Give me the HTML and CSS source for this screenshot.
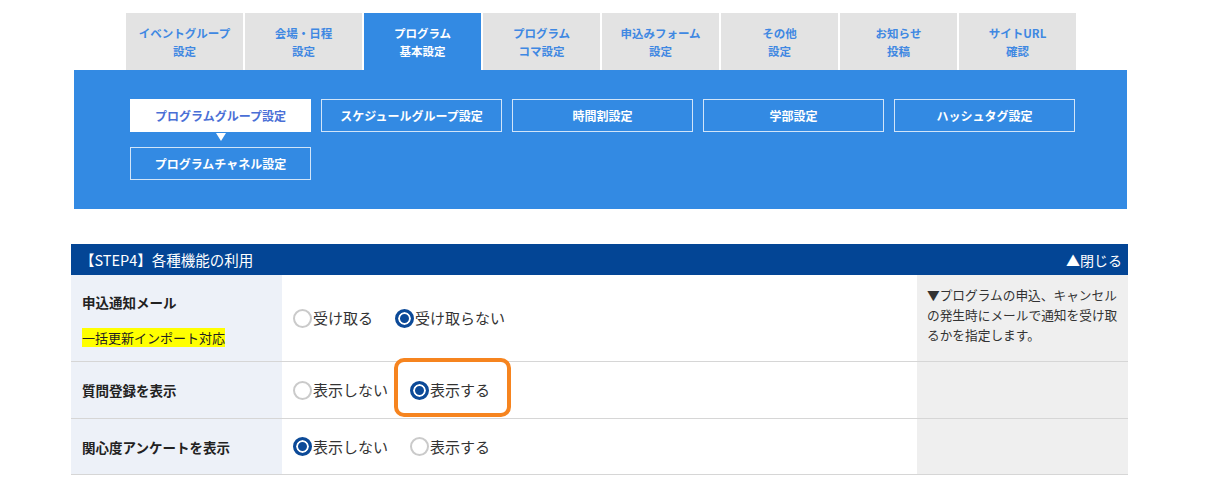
FILE: index.html
```html
<!DOCTYPE html>
<html lang="ja">
<head>
    <meta charset="UTF-8">
    <meta name="viewport" content="width=device-width, initial-scale=1.0">
    <title>プログラム基本設定</title>
    <link rel="stylesheet" href="styles.css">
</head>
<body>
    <div class="page">

        <ul class="tabs">
            <li class="tab">イベントグループ<br>設定</li>
            <li class="tab">会場・日程<br>設定</li>
            <li class="tab active">プログラム<br>基本設定</li>
            <li class="tab">プログラム<br>コマ設定</li>
            <li class="tab">申込みフォーム<br>設定</li>
            <li class="tab">その他<br>設定</li>
            <li class="tab">お知らせ<br>投稿</li>
            <li class="tab">サイトURL<br>確認</li>
        </ul>

        <div class="panel">
            <div class="subnav">
                <a class="subBtn current">プログラムグループ設定</a>
                <a class="subBtn">スケジュールグループ設定</a>
                <a class="subBtn">時間割設定</a>
                <a class="subBtn">学部設定</a>
                <a class="subBtn">ハッシュタグ設定</a>
                <a class="subBtn">プログラムチャネル設定</a>
            </div>
        </div>

        <div class="stepBox">
            <div class="stepHead">
                <span>【STEP4】各種機能の利用</span>
                <span class="toggle">▲閉じる</span>
            </div>

            <div class="row rowTall">
                <div class="label labelTop">
                    <p>申込通知メール</p>
                    <p class="mark">一括更新インポート対応</p>
                </div>
                <div class="field">
                    <label class="option"><input type="radio" name="mail">受け取る</label>
                    <label class="option"><input type="radio" name="mail" checked>受け取らない</label>
                </div>
                <div class="note">▼プログラムの申込、キャンセルの発生時にメールで通知を受け取るかを指定します。</div>
            </div>

            <div class="row rowMid">
                <div class="label">質問登録を表示</div>
                <div class="field">
                    <label class="option"><input type="radio" name="question">表示しない</label>
                    <label class="option callout"><input type="radio" name="question" checked>表示する</label>
                </div>
                <div class="note"></div>
            </div>

            <div class="row rowLow">
                <div class="label">関心度アンケートを表示</div>
                <div class="field">
                    <label class="option"><input type="radio" name="survey" checked>表示しない</label>
                    <label class="option"><input type="radio" name="survey">表示する</label>
                </div>
                <div class="note"></div>
            </div>
        </div>

    </div>
</body>
</html>
```

FILE: styles.css
```css
body{
    margin: 0;
    background-color: #fff;
    font-family: "Noto Sans CJK JP", "Noto Sans", sans-serif;
    color: #333;
}

.page{
    width: 1057px;
    margin-left: 71px;
    padding-top: 13px;
}

/* top tabs */
.tabs{
    display: flex;
    gap: 2px;
    list-style: none;
    margin: 0 0 0 55px;
    padding: 0;
}

.tab{
    width: 117px;
    height: 57px;
    display: flex;
    align-items: center;
    justify-content: center;
    text-align: center;
    background-color: #e3e3e3;
    color: #3f88e2;
    font-size: 11.5px;
    font-weight: bold;
    line-height: 18px;
}

.tab.active{
    background-color: #338ae3;
    color: #fff;
}

/* blue sub menu */
.panel{
    margin: 0 1px 0 3px;
    height: 139px;
    box-sizing: border-box;
    padding: 29px 0 0 56px;
    background-color: #338ae3;
}

.subnav{
    display: flex;
    flex-wrap: wrap;
    column-gap: 10px;
    row-gap: 15px;
}

.subBtn{
    position: relative;
    width: 181px;
    height: 33px;
    box-sizing: border-box;
    display: flex;
    align-items: center;
    justify-content: center;
    border: 1px solid rgba(255, 255, 255, 0.78);
    color: #fff;
    font-size: 12px;
    font-weight: bold;
}

.subBtn.current{
    background-color: #fff;
    border-color: #fff;
    color: #4a6fd6;
}

.subBtn.current::after{
    content: "";
    position: absolute;
    top: calc(100% + 2px);
    left: 50%;
    margin-left: -5px;
    border-left: 5px solid transparent;
    border-right: 5px solid transparent;
    border-top: 8px solid #fff;
}

/* step table */
.stepBox{
    margin-top: 35px;
}

.stepHead{
    height: 31px;
    display: flex;
    align-items: center;
    justify-content: space-between;
    padding: 0 6px 0 9px;
    background-color: #034595;
    color: #fff;
    font-size: 14.5px;
}

.toggle{
    font-size: 14px;
}

.row{
    display: grid;
    grid-template-columns: 211px 635px 211px;
    box-sizing: border-box;
    border-bottom: 1px solid #d6d6d6;
}

.rowTall{ height: 87px; }
.rowMid{ height: 57px; }
.rowLow{ height: 56px; }

.row > div{
    box-sizing: border-box;
}

.label{
    display: flex;
    align-items: center;
    padding-left: 11px;
    background-color: #edf1f8;
    color: #222;
    font-size: 13.5px;
    font-weight: bold;
}

.labelTop{
    display: block;
    padding-top: 17px;
}

.labelTop p{
    margin: 0;
    line-height: 20px;
}

.labelTop .mark{
    display: inline-block;
    margin-top: 16px;
    background-color: #ffff00;
    font-size: 13px;
    font-weight: normal;
    line-height: 19px;
}

.field{
    display: flex;
    align-items: center;
    gap: 22px;
    padding-left: 11px;
}

.option{
    position: relative;
    display: flex;
    align-items: center;
    gap: 1px;
    font-size: 15px;
    line-height: 20px;
    color: #333;
}

.option input{
    -webkit-appearance: none;
    appearance: none;
    width: 19px;
    height: 19px;
    margin: 0;
    box-sizing: border-box;
    border: 2px solid #cacaca;
    border-radius: 50%;
    background-color: #fff;
}

.option input:checked{
    border: 3px solid #0c4a98;
    background-color: #0c4a98;
    box-shadow: inset 0 0 0 2px #fff;
}

/* orange frame drawn over the chosen option */
.callout::after{
    content: "";
    position: absolute;
    top: -22px;
    bottom: -17px;
    left: -16px;
    right: -21px;
    border: 4px solid #f6841f;
    border-radius: 10px;
}

.note{
    padding: 10px 2px 0 10px;
    background-color: #efefef;
    font-size: 12.7px;
    line-height: 20px;
    color: #333;
}
```
